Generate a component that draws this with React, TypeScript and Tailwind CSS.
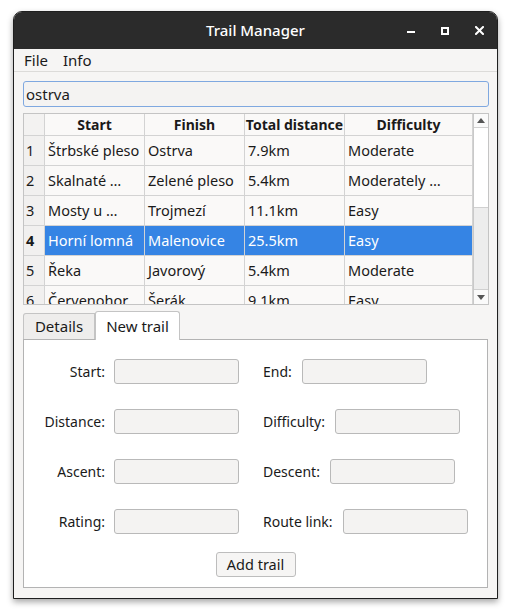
import React from "react";

const rows = [
  ["1", "Štrbské pleso", "Ostrva", "7.9km", "Moderate"],
  ["2", "Skalnaté …", "Zelené pleso", "5.4km", "Moderately …"],
  ["3", "Mosty u …", "Trojmezí", "11.1km", "Easy"],
  ["4", "Horní lomná", "Malenovice", "25.5km", "Easy"],
  ["5", "Řeka", "Javorový", "5.4km", "Moderate"],
  ["6", "Červenohor…", "Šerák", "9.1km", "Easy"],
];

function Field({ w = "w-[125px]" }: { w?: string }) {
  return <div className={`${w} h-[25px] rounded-[3px] border border-[#b9b9b9] bg-[#f4f3f2]`} />;
}

export default function App() {
  const font = { fontFamily: '"Noto Sans", "DejaVu Sans", sans-serif' };
  return (
    <div className="w-[511px] h-[615px] bg-white pt-[11px] pl-[13px]" style={font}>
      <div className="w-[485px] h-[588px] flex flex-col border border-[#1f1f1f] rounded-t-[9px] bg-[#f6f5f4] shadow-[0_3px_6px_rgba(0,0,0,0.35)] overflow-hidden text-[#2e3436]">
        {/* Title bar */}
        <div className="h-[37px] bg-[#2b2b2b] relative flex items-center justify-center">
          <span className="text-white text-[15px] font-medium">Trail Manager</span>
          <div className="absolute right-0 top-0 h-full">
            <div className="absolute left-[-90px] top-[19px] w-[8px] h-[2px] bg-white" />
            <div className="absolute left-[-56px] top-[15px] w-[8px] h-[8px] border-2 border-white" />
            <svg className="absolute left-[-22px] top-[14px]" width="9" height="9" viewBox="0 0 9 9">
              <path d="M1 1L8 8M8 1L1 8" stroke="white" strokeWidth="2" strokeLinecap="square" />
            </svg>
          </div>
        </div>
        {/* Menu */}
        <div className="h-[23px] border-b border-[#dcdbd9] flex items-center gap-[15px] pl-[10px] text-[15px] text-[#1a1a1a]">
          <span>File</span>
          <span>Info</span>
        </div>
        {/* Body */}
        <div className="flex flex-col pl-[9px] pr-[8px] pt-[9px]">
          <div className="h-[26px] rounded-[3px] border border-[#7fa8e0] bg-[#f4f3f2] flex items-center pl-[2px] text-[15px] text-[#1a1a1a]">
            ostrva
          </div>
          {/* Table */}
          <div className="mt-[6px] h-[192px] border border-[#c4c4c4] flex overflow-hidden bg-[#faf9f8]">
            <div className="w-[449px] overflow-hidden">
              <div className="grid grid-cols-[21px_100px_100px_100px_128px] text-[14.5px] text-[#1a1a1a]">
                <div className="h-[22px] border-r border-b border-[#d3d3d3] bg-[#f3f2f1]" />
                {["Start", "Finish", "Total distance", "Difficulty"].map((h) => (
                  <div key={h} className="h-[22px] border-r border-b border-[#d3d3d3] bg-[#faf9f8] flex items-center justify-center font-bold whitespace-nowrap overflow-hidden text-[14px]">
                    {h}
                  </div>
                ))}
                {rows.map((r) => {
                  const sel = r[0] === "4";
                  return (
                    <React.Fragment key={r[0]}>
                      <div className={`h-[30px] border-r border-b border-[#d3d3d3] bg-[#f1f0ef] flex items-center pl-[2px] ${sel ? "font-bold" : ""}`}>
                        {r[0]}
                      </div>
                      {r.slice(1).map((c, i) => (
                        <div
                          key={i}
                          className={`h-[30px] border-r border-b border-[#d3d3d3] flex items-center pl-[3px] whitespace-nowrap overflow-hidden ${sel ? "bg-[#3584e4] text-white" : "bg-[#faf9f8]"}`}
                        >
                          {c}
                        </div>
                      ))}
                    </React.Fragment>
                  );
                })}
              </div>
            </div>
            {/* Scrollbar */}
            <div className="w-[15px] flex flex-col border-l border-[#c9c9c9] bg-[#ececec]">
              <div className="h-[14px] bg-[#fafafa] border-b border-[#d0d0d0] flex items-center justify-center">
                <svg width="8" height="5" viewBox="0 0 8 5"><path d="M0 5L4 0L8 5Z" fill="#555" /></svg>
              </div>
              <div className="h-[80px] bg-white border-b border-[#d0d0d0]" />
              <div className="flex-1 bg-[#ededed]" />
              <div className="h-[15px] bg-[#fafafa] border-t border-[#d0d0d0] flex items-center justify-center">
                <svg width="8" height="5" viewBox="0 0 8 5"><path d="M0 0L8 0L4 5Z" fill="#555" /></svg>
              </div>
            </div>
          </div>
          {/* Tabs */}
          <div className="mt-[6px] h-[28px] flex items-end text-[15px] text-[#1a1a1a] relative z-10">
            <div className="h-[26px] w-[72px] border border-b-0 border-[#c4c4c4] bg-[#eeedec] rounded-tl-[3px] flex items-center justify-center">
              Details
            </div>
            <div className="h-[29px] -mb-px w-[85px] border border-b-0 border-[#c4c4c4] bg-white rounded-t-[3px] flex items-center justify-center">
              New trail
            </div>
          </div>
          <div className="mr-[1px] h-[249px] border border-[#b3b3b3] bg-white flex flex-col pt-[19px] text-[14px] text-[#1a1a1a]">
            {[
              ["Start:", "End:"],
              ["Distance:", "Difficulty:"],
              ["Ascent:", "Descent:"],
              ["Rating:", "Route link:"],
            ].map(([a, b], idx) => (
              <div key={a} className={`flex items-center h-[25px] ${idx > 0 ? "mt-[25px]" : ""}`}>
                <div className="w-[81px] text-right">{a}</div>
                <div className="ml-[9px]"><Field /></div>
                <div className="ml-[24px]">{b}</div>
                <div className="ml-[10px]"><Field /></div>
              </div>
            ))}
            <div className="mt-[18px] flex justify-center">
              <div className="h-[25px] w-[80px] rounded-[3px] border border-[#bdbdbd] bg-[#f6f5f4] flex items-center justify-center text-[14.5px]">
                Add trail
              </div>
            </div>
          </div>
        </div>
      </div>
    </div>
  );
}
